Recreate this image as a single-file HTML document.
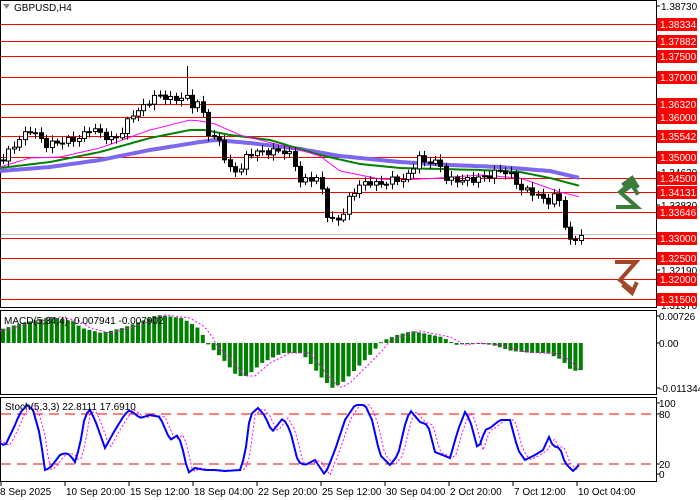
<!DOCTYPE html>
<html><head><meta charset="utf-8"><style>
html,body{margin:0;padding:0;background:#fff;width:700px;height:500px;overflow:hidden;font-family:"Liberation Sans",sans-serif}
svg{position:absolute;left:0;top:0}
</style></head><body>
<svg id="s" width="700" height="500" xmlns="http://www.w3.org/2000/svg" font-family="Liberation Sans, sans-serif" font-size="10">
<rect x="0.5" y="0.5" width="656" height="307" fill="none" stroke="#000"/>
<rect x="0.5" y="310.5" width="656" height="84" fill="none" stroke="#000"/>
<rect x="0.5" y="397.5" width="656" height="84" fill="none" stroke="#000"/>
<g id="hl"></g>
<g id="ma"></g>
<g id="cd"></g>
<g id="mc"></g>
<g id="st"></g>
<g id="lb"></g>
<g fill="none" stroke="#3a7d3a" stroke-width="4" stroke-linecap="square">
<polyline points="618,207 637,207 620,192 632,182"/>
<polyline points="624,184 632,178 637,186"/>
<polyline points="624,191 632,185 637,193"/>
</g>
<g fill="none" stroke="#a0492a" stroke-width="4" stroke-linecap="square">
<polyline points="617,262 636,262 620,280 632,290"/>
<polyline points="624,286 632,293 636,284"/>
</g>
<text x="14" y="11" font-size="10">GBPUSD,H4</text>
<polygon points="3,4 10,4 6.5,9" fill="#888"/>
<text x="4" y="324" font-size="10">MACD(5,34,4) -0.007941 -0.007902</text>
<text x="5" y="410" font-size="10">Stoch(5,3,3) 22.8111 17.6910</text>
</svg>
<script>
(function(){
var NS="http://www.w3.org/2000/svg";
function el(p,t,a,txt){var e=document.createElementNS(NS,t);for(var k in a)e.setAttribute(k,a[k]);if(txt!==undefined)e.textContent=txt;document.getElementById(p).appendChild(e);return e;}
function interp(k,x){if(x<=k[0][0])return k[0][1];for(var i=1;i<k.length;i++){if(x<=k[i][0]){var a=k[i-1],b=k[i];return a[1]+(b[1]-a[1])*(x-a[0])/(b[0]-a[0]);}}return k[k.length-1][1];}
function pts(k,off){off=off||0;var s="";for(var x=0;x<=581;x+=3)s+=x+","+(interp(k,x)+off).toFixed(1)+" ";return s;}
var lv=[[24,"1.38334"],[41,"1.37882"],[56,"1.37500"],[77,"1.37000"],[104,"1.36320"],[117,"1.36000"],[136,"1.35542"],[157,"1.35000"],[178,"1.34500"],[192,"1.34131"],[212,"1.33646"],[238,"1.33000"],[258,"1.32500"],[279,"1.32000"],[299,"1.31500"]];
el("hl","line",{x1:1,y1:234.5,x2:656,y2:234.5,stroke:"#c0c0c0"});
var gl=[[6,"1.38730"],[172,"1.34630"],[205,"1.33830"],[270,"1.32190"],[305,"1.31370"]];
gl.forEach(function(g){el("lb","line",{x1:656,y1:g[0],x2:660,y2:g[0],stroke:"#000"});el("lb","text",{x:661,y:g[0]+4},g[1]);});
lv.forEach(function(l){el("hl","line",{x1:1,y1:l[0]+.5,x2:656,y2:l[0]+.5,stroke:"#f00","stroke-width":1});el("lb","rect",{x:657,y:l[0]-6,width:40,height:13,fill:"#f00"});el("lb","text",{x:660,y:l[0]+4,fill:"#fff"},l[1]);});
var blue=[[0,171],[50,167],[100,160],[150,150],[200,142],[215,140],[250,143],[300,149],[340,156],[400,162],[450,165],[500,167],[550,171],[580,178]];
var green=[[0,168],[50,162],[100,152],[150,138],[190,130],[205,130],[230,135],[270,140],[320,155],[360,164],[400,168],[440,169],[480,170],[520,172],[550,178],[580,186]];
var mag=[[0,167],[30,158],[60,157],[100,148],[150,130],[190,120],[200,121],[215,124],[240,135],[260,140],[300,150],[320,156],[340,171],[380,179],[400,180],[440,178],[480,175],[520,178],[540,185],[560,192],[580,197]];
el("ma","polyline",{points:pts(blue),fill:"none",stroke:"#7b68ee","stroke-width":4});
el("ma","polyline",{points:pts(green),fill:"none",stroke:"#008000","stroke-width":2});
el("ma","polyline",{points:pts(mag),fill:"none",stroke:"#f0f","stroke-width":1});
var pr=[[2,160],[10,150],[20,138],[30,130],[37,135],[45,145],[55,143],[70,140],[80,138],[90,128],[100,133],[110,140],[120,135],[125,127],[130,115],[140,110],[150,100],[158,95],[165,97],[172,100],[180,98],[185,95],[190,105],[195,105],[200,100],[205,125],[210,137],[215,140],[220,140],[225,160],[230,170],[240,170],[245,158],[250,153],[260,152],[270,152],[280,150],[290,155],[295,165],[300,182],[310,178],[320,180],[325,210],[330,222],[340,218],[345,210],[350,195],[360,185],[370,182],[380,185],[390,180],[400,180],[410,175],[415,162],[420,155],[425,165],[430,160],[440,165],[445,178],[450,180],[460,180],[470,180],[480,178],[490,175],[500,170],[505,172],[510,175],[515,180],[520,190],[525,190],[530,190],[535,195],[540,197],[545,200],[550,202],[555,195],[560,200],[563,210],[566,240],[570,242],[575,238],[580,236]];
var prev=interp(pr,0),n=0;
for(var x=3;x<=581;x+=5.4){n++;var c=interp(pr,x)+Math.sin(n*2.3)*3;var o=prev;var tp=Math.min(o,c),bt=Math.max(o,c);var hi=tp-2-Math.abs(Math.sin(n*1.7))*4,lo=bt+2+Math.abs(Math.cos(n*1.3))*4;
if(Math.abs(x-185)<3)hi=66;
var xr=Math.round(x)+0.5;
el("cd","line",{x1:xr,y1:hi.toFixed(1),x2:xr,y2:lo.toFixed(1),stroke:"#000"});
el("cd","rect",{x:xr-2,y:tp.toFixed(1),width:4,height:Math.max(1,bt-tp).toFixed(1),fill:c<o?"#fff":"#000",stroke:"#000","stroke-width":1});prev=c;}
var mk=[[0,-14],[20,-20],[50,-26],[70,-22],[80,-15],[100,-10],[120,-15],[140,-22],[155,-28],[165,-27],[180,-25],[195,-16],[203,-5],[207,3],[220,15],[235,33],[245,33],[260,20],[280,10],[300,10],[320,35],[330,45],[340,40],[355,25],[370,10],[380,-2],[395,-8],[410,-12],[420,-10],[440,-6],[455,2],[470,0],[490,2],[500,5],[510,8],[530,10],[545,10],[560,17],[570,28],[580,27]];
var Z=343;
for(var x2=1;x2<=582;x2+=5.4){var v=interp(mk,x2);el("mc","rect",{x:x2.toFixed(1),y:(v<0?Z+v:Z).toFixed(1),width:4,height:Math.max(1,Math.abs(v)).toFixed(1),fill:"#008000"});}
var sg=mk.map(function(p){return [p[0]+10,p[1]];});sg.unshift([0,-12]);
el("mc","polyline",{points:pts(sg,Z),fill:"none",stroke:"#f0f","stroke-dasharray":"2,2"});
[[316,"0.00726"],[343,"0.00"],[388,"-0.011344"]].forEach(function(g){el("lb","line",{x1:656,y1:g[0],x2:660,y2:g[0],stroke:"#000"});el("lb","text",{x:659,y:g[0]+4},g[1]);});
el("st","line",{x1:1,y1:414,x2:656,y2:414,stroke:"#f00","stroke-dasharray":"10,6"});
el("st","line",{x1:1,y1:464,x2:656,y2:464,stroke:"#f00","stroke-dasharray":"10,6"});
var sk=[[0,443],[5,446],[15,425],[20,413],[27,405],[33,410],[40,435],[45,470],[50,468],[60,455],[65,453],[70,455],[75,462],[80,445],[85,415],[90,410],[95,420],[105,448],[115,430],[125,414],[130,410],[140,418],[150,415],[160,417],[170,440],[178,435],[182,446],[188,473],[195,468],[205,470],[215,470],[225,471],[240,470],[245,455],[250,415],[258,408],[265,416],[272,432],[283,418],[290,430],[298,462],[305,465],[315,460],[325,475],[335,450],[345,420],[355,405],[365,405],[372,420],[380,455],[390,465],[398,455],[405,425],[410,410],[420,422],[428,425],[435,452],[450,458],[458,430],[465,412],[470,420],[478,450],[485,430],[490,428],[500,420],[510,420],[518,450],[525,460],[535,455],[543,450],[549,437],[553,446],[560,448],[565,463],[573,471],[580,464]];
var sd=sk.map(function(p){return [p[0]+5,p[1]];});sd.unshift([0,440]);
el("st","polyline",{points:pts(sd),fill:"none",stroke:"#f0f","stroke-dasharray":"2,2"});
el("st","polyline",{points:pts(sk),fill:"none",stroke:"#00f","stroke-width":2});
[[403,"100"],[414,"80"],[464,"20"],[474,"0"]].forEach(function(g){el("lb","line",{x1:656,y1:g[0],x2:660,y2:g[0],stroke:"#000"});el("lb","text",{x:659,y:g[0]+4},g[1]);});
var tl=["8 Sep 2025","10 Sep 20:00","15 Sep 12:00","18 Sep 04:00","22 Sep 20:00","25 Sep 12:00","30 Sep 04:00","2 Oct 20:00","7 Oct 12:00","10 Oct 04:00"];
tl.forEach(function(t,j){var x=j*64+1;el("lb","line",{x1:x,y1:482,x2:x,y2:486,stroke:"#000"});el("lb","text",{x:j==0?0:x+1,y:495},t);});
})();
</script>
</body></html>
